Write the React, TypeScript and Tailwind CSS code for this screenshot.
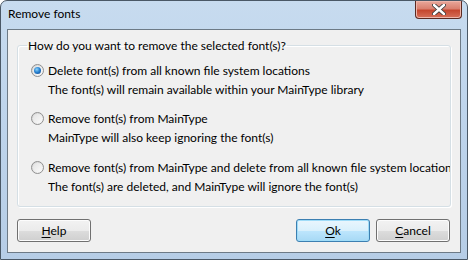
import React from "react";

const font = { fontFamily: 'Lato, "Noto Sans", sans-serif' };

function Radio({ checked }: { checked?: boolean }) {
  return (
    <span className="relative flex h-[13px] w-[13px] shrink-0 items-center justify-center rounded-full border border-[#8f8f8f] bg-gradient-to-br from-[#d2d2d2] to-[#fbfbfb]">
      <span className="h-[9px] w-[9px] rounded-full bg-gradient-to-br from-[#e3e3e3] to-[#fafafa]" />
      {checked && (
        <span className="absolute left-[2px] top-[2px] h-[7px] w-[7px] rounded-full bg-[radial-gradient(circle_at_40%_35%,#8fd4fa_0%,#2a84d2_45%,#0b3f8a_100%)]" />
      )}
    </span>
  );
}

function Option({
  checked,
  title,
  desc,
  className,
}: {
  checked?: boolean;
  title: string;
  desc: string;
  className?: string;
}) {
  return (
    <div className={"flex flex-col " + (className ?? "")}>
      <div className="flex h-[19px] items-center whitespace-nowrap">
        <Radio checked={checked} />
        <span className="ml-[4px]">{title}</span>
      </div>
      <div className="ml-[17px] h-[19px] leading-[19px] whitespace-nowrap">{desc}</div>
    </div>
  );
}

function Btn({
  children,
  def,
  className,
}: {
  children: React.ReactNode;
  def?: boolean;
  className?: string;
}) {
  return (
    <div
      className={
        "flex h-[23px] w-[74px] items-center justify-center rounded-[3px] border " +
        (def
          ? "border-[#3c7fb1] shadow-[inset_0_0_0_1px_#9fdcf8] bg-[linear-gradient(#eaf6fd_0%,#d9f0fc_50%,#bee6fd_51%,#a7d9f5_100%)] "
          : "border-[#707070] shadow-[inset_0_0_0_1px_#fcfcfc] bg-[linear-gradient(#f2f2f2_0%,#ebebeb_50%,#dddddd_51%,#cfcfcf_100%)] ") +
        (className ?? "")
      }
    >
      <span className="text-[12px] text-black">{children}</span>
    </div>
  );
}

export default function App() {
  return (
    <div
      style={font}
      className="relative flex h-[260px] w-[468px] flex-col overflow-hidden rounded-t-[7px] border border-[#4a5866] bg-[linear-gradient(180deg,#c7dbef_0%,#bfd5ec_40%,#b6cde6_100%)] text-[12px] text-black"
    >
      {/* title bar */}
      <div className="flex h-[28px] shrink-0 items-start">
        <span className="ml-[7px] mt-[5px] text-[12px] leading-[16px] text-black">Remove fonts</span>
        <div className="ml-auto mr-[5px] flex h-[18px] w-[47px] items-center justify-center rounded-b-[4px] border border-t-0 border-[#5b2a22] bg-[linear-gradient(#e9a89b_0%,#d9806f_45%,#c5472f_55%,#d6705a_100%)] shadow-[inset_0_0_0_1px_#eeb5aa]">
          <svg width="14" height="11" viewBox="0 0 14 11">
            <path
              d="M2 1 L12 10 M12 1 L2 10"
              stroke="#3b3b3b"
              strokeWidth="4.2"
              strokeLinecap="round"
            />
            <path
              d="M2 1 L12 10 M12 1 L2 10"
              stroke="#ffffff"
              strokeWidth="2.4"
              strokeLinecap="round"
            />
          </svg>
        </div>
      </div>

      {/* client area */}
      <div className="mx-[6px] mb-[6px] flex min-w-0 flex-1 flex-col border border-[#6d7a86] bg-[#f0f0f0] px-[9px]">
        <fieldset className="mt-[6px] min-w-0 rounded-[3px] border border-[#d5dfe5] pb-[10px] pl-0 pr-0 shadow-[inset_1px_1px_0_#ffffff,1px_1px_0_#ffffff]">
          <legend className="ml-[9px] px-[1px] leading-[19px]">
            How do you want to remove the selected font(s)?
          </legend>
          <div className="ml-[13px] mt-[6px] flex min-w-0 flex-col overflow-hidden">
            <Option
              checked
              title="Delete font(s) from all known file system locations"
              desc="The font(s) will remain available within your MainType library"
            />
            <Option
              className="mt-[10px]"
              title="Remove font(s) from MainType"
              desc="MainType will also keep ignoring the font(s)"
            />
            <Option
              className="mt-[11px]"
              title="Remove font(s) from MainType and delete from all known file system locations"
              desc="The font(s) are deleted, and MainType will ignore the font(s)"
            />
          </div>
        </fieldset>
        <div className="mt-[12px] flex items-center">
          <Btn>
            <span className="underline underline-offset-2">H</span>elp
          </Btn>
          <Btn def className="ml-auto">
            <span className="underline underline-offset-2">O</span>k
          </Btn>
          <Btn className="ml-[6px] mr-[1px]">
            <span className="underline underline-offset-2">C</span>ancel
          </Btn>
        </div>
      </div>
    </div>
  );
}
